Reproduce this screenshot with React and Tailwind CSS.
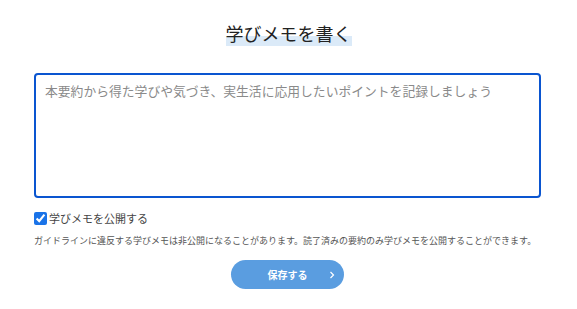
import React, { useState } from 'react';

const font = { fontFamily: '"Noto Sans CJK JP", "Noto Sans", sans-serif' };

const MemoForm = () => {
  const [isPublic, setIsPublic] = useState(true);

  return (
    <div className="w-[577px] h-[309px] bg-white text-[#333]" style={font}>
      <div className="flex flex-col items-center pt-[20px]">
        <h2 className="text-[18px] leading-[26px] font-normal text-[#222] bg-[linear-gradient(transparent_60%,#dbeaf8_60%)]">
          学びメモを書く
        </h2>
      </div>

      <div className="pl-[34px] pr-[36px] mt-[27px]">
        <textarea
          className="block w-full h-[125px] border-2 border-[#0a55d0] rounded-[4px] px-[9px] py-[6px] text-[12.8px] leading-[20px] outline-none resize-none placeholder:text-[#8a8a8a]"
          placeholder="本要約から得た学びや気づき、実生活に応用したいポイントを記録しましょう"
          style={font}
        />

        <label className="flex items-center gap-[2px] mt-[12px] text-[11px] leading-[16px] text-[#444]">
          <input
            type="checkbox"
            checked={isPublic}
            onChange={() => setIsPublic(!isPublic)}
            className="w-[13px] h-[13px] m-0 accent-[#1a73e8]"
          />
          学びメモを公開する
        </label>

        <p className="mt-[8px] text-[9px] leading-[14px] text-[#555]">
          ガイドラインに違反する学びメモは非公開になることがあります。読了済みの要約のみ学びメモを公開することができます。
        </p>
      </div>

      <div className="flex justify-center mt-[12px] pr-[2px]">
        <button className="relative w-[113px] h-[29px] rounded-full bg-[#5a9de0] text-white text-[10px] font-bold flex items-center justify-center">
          保存する
          <svg className="absolute right-[9px] top-1/2 -translate-y-1/2" width="6" height="8" viewBox="0 0 6 8" fill="none">
            <path d="M1.5 1 L4.5 4 L1.5 7" stroke="white" strokeWidth="1.2" />
          </svg>
        </button>
      </div>
    </div>
  );
};

export default function App() {
  return <MemoForm />;
}
